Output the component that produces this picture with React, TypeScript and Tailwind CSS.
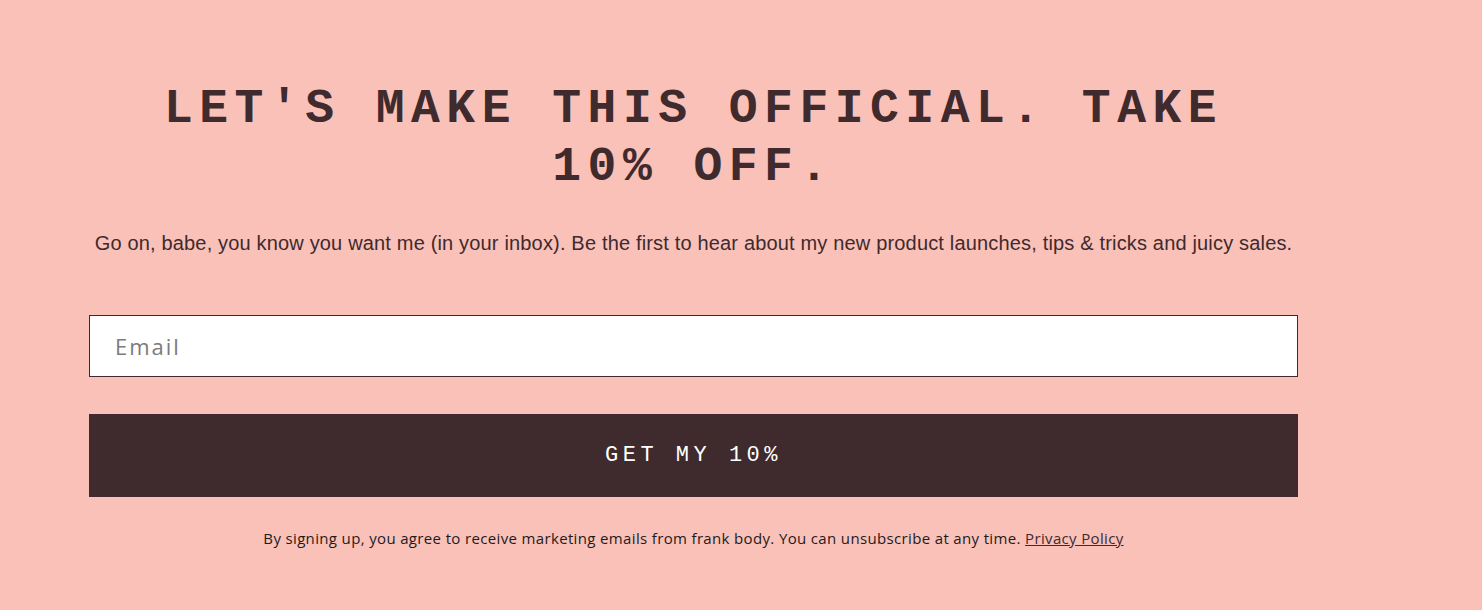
export default function App() {
  return (
    <div className="min-h-[610px] w-full bg-[#fac1b9] pt-[80px] pl-[89px]">
      <div className="w-[1209px] flex flex-col">
        {/* HEADING */}
        <h2 className="px-[50px] text-center text-[48px] leading-[58px] font-bold tracking-[6.5px] text-[#3f2a2d] font-['Liberation_Mono',monospace]">
          LET'S MAKE THIS OFFICIAL. TAKE 10% OFF.
        </h2>

        {/* SUBTEXT */}
        <p className="mt-[33px] text-center text-[20px] leading-[28px] tracking-[0.17px] text-[#3f2a2d] font-['Liberation_Sans',Arial,sans-serif]">
          Go on, babe, you know you want me (in your inbox). Be the first to hear about my new product launches, tips &amp; tricks and juicy sales.
        </p>

        {/* EMAIL */}
        <input
          type="email"
          placeholder="Email"
          className="mt-[58px] h-[62px] w-full border border-[#3f2a2d] bg-white px-[25px] text-[22px] tracking-[2px] text-[#3f2a2d] placeholder:text-[#7b7b7b] outline-none font-['Open_Sans',sans-serif]"
        />

        {/* BUTTON */}
        <button className="mt-[37px] h-[83px] w-full bg-[#3f2b2e] text-white text-[22px] tracking-[4.5px] font-['Liberation_Mono',monospace]">
          GET MY 10%
        </button>

        {/* DISCLAIMER */}
        <p className="mt-[31px] text-center text-[15px] leading-[20px] tracking-[0.35px] text-[#1c1c1c] font-['Open_Sans',sans-serif]">
          By signing up, you agree to receive marketing emails from frank body. You can unsubscribe at any time.{" "}
          <a href="#" className="underline text-[#3f2a2d]">Privacy Policy</a>
        </p>
      </div>
    </div>
  );
}
